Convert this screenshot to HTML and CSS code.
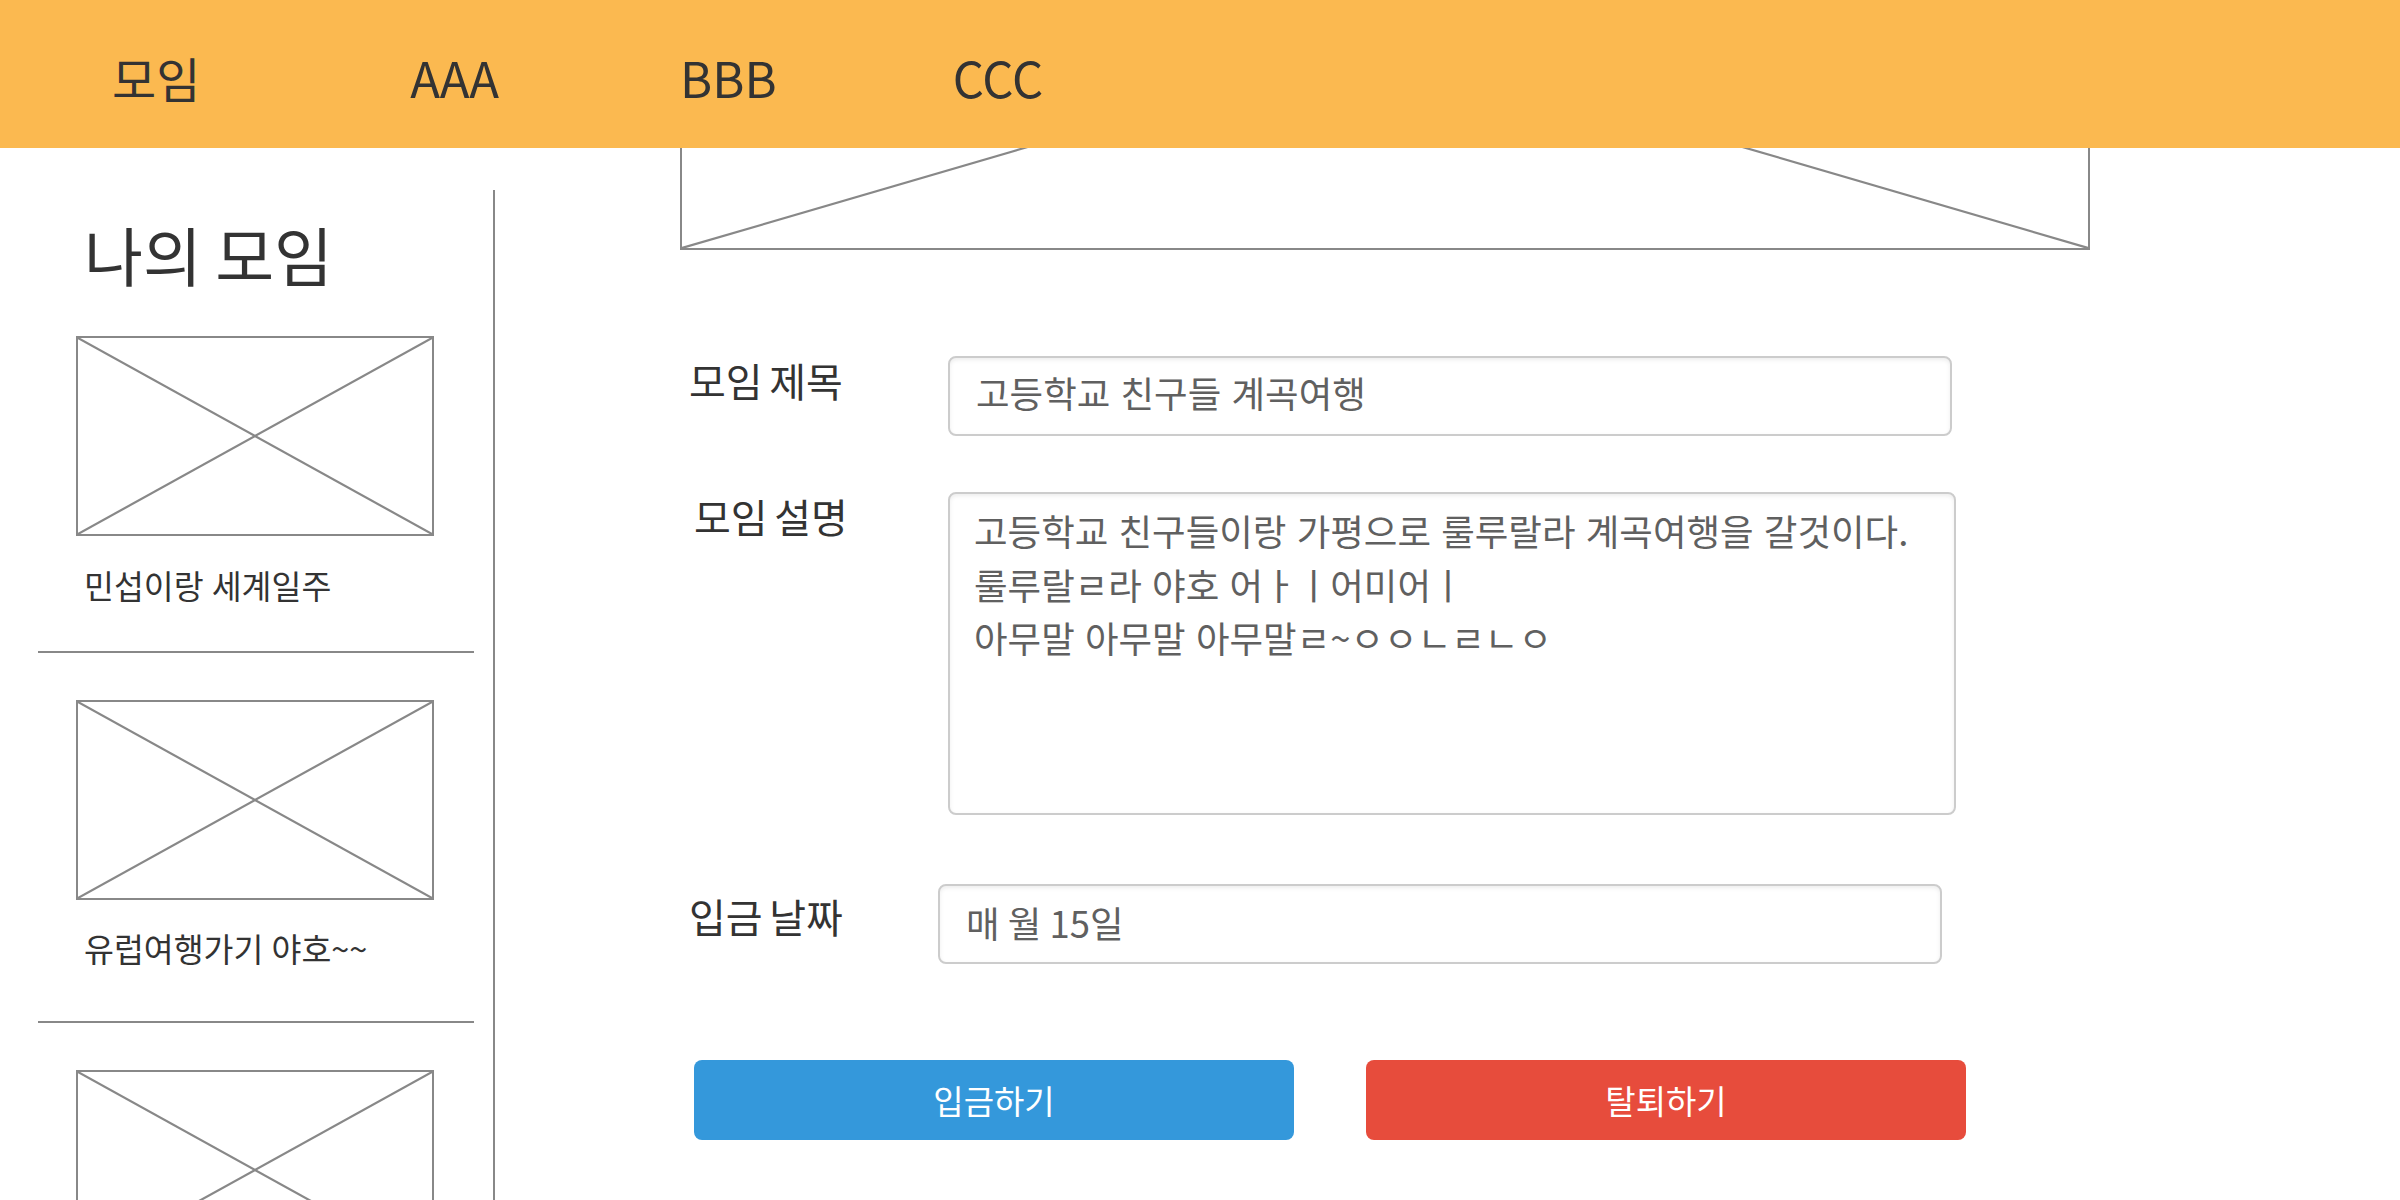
FILE: index.html
```html
<!DOCTYPE html>
<html lang="ko">
<head>
  <meta charset="UTF-8">
  <title>모임</title>
  <link rel="stylesheet" href="styles.css">
</head>
<body>

  <header class="topbar">
    <a class="nav-link nav-home">모임</a>
    <a class="nav-link nav-a">AAA</a>
    <a class="nav-link nav-b">BBB</a>
    <a class="nav-link">CCC</a>
  </header>

  <div class="page">
    <aside class="sidebar">
      <h2 class="sidebar-title">나의 모임</h2>

      <div class="group-card">
        <svg class="thumb" viewBox="0 0 100 100" preserveAspectRatio="none">
          <line x1="0" y1="0" x2="100" y2="100" />
          <line x1="100" y1="0" x2="0" y2="100" />
        </svg>
        <p class="group-name">민섭이랑 세계일주</p>
      </div>

      <div class="group-card group-card-tall">
        <svg class="thumb" viewBox="0 0 100 100" preserveAspectRatio="none">
          <line x1="0" y1="0" x2="100" y2="100" />
          <line x1="100" y1="0" x2="0" y2="100" />
        </svg>
        <p class="group-name">유럽여행가기 야호~~</p>
      </div>

      <div class="group-card group-card-last">
        <svg class="thumb" viewBox="0 0 100 100" preserveAspectRatio="none">
          <line x1="0" y1="0" x2="100" y2="100" />
          <line x1="100" y1="0" x2="0" y2="100" />
        </svg>
      </div>
    </aside>

    <main class="content">
      <!-- banner is scrolled mostly under the top bar -->
      <div class="banner-clip">
        <svg class="banner" viewBox="0 0 100 100" preserveAspectRatio="none">
          <line x1="0" y1="0" x2="100" y2="100" />
          <line x1="100" y1="0" x2="0" y2="100" />
        </svg>
      </div>

      <div class="form-row form-row-title">
        <label class="form-label">모임 제목</label>
        <div class="field">고등학교 친구들 계곡여행</div>
      </div>

      <div class="form-row form-row-desc">
        <label class="form-label">모임 설명</label>
        <div class="field field-area">고등학교 친구들이랑 가평으로 룰루랄라 계곡여행을 갈것이다.<br>룰루랄ㄹ라 야호 어ㅏㅣ어미어ㅣ<br>아무말 아무말 아무말ㄹ~ㅇㅇㄴㄹㄴㅇ</div>
      </div>

      <div class="form-row form-row-date">
        <label class="form-label">입금 날짜</label>
        <div class="field field-date">매 월 15일</div>
      </div>

      <div class="actions">
        <button class="btn btn-blue">입금하기</button>
        <button class="btn btn-red">탈퇴하기</button>
      </div>
    </main>
  </div>

</body>
</html>
```

FILE: styles.css
```css
* { box-sizing: border-box; }
html, body { margin: 0; height: 100%; }
body { height: 1200px; overflow: hidden; background: #fff; color: #333; font-family: "Noto Sans CJK KR", "Noto Sans", sans-serif; }

.topbar { display: flex; align-items: center; height: 148px; padding: 0 0 0 112px; background: #fbb950; }
.nav-link { font-size: 49px; line-height: 60px; margin-top: 5px; margin-right: 176px; color: #333; }
.nav-home { font-size: 48px; margin-right: 210px; }
.nav-a { margin-right: 181px; }

.page { display: flex; height: 1052px; overflow: hidden; }

.sidebar { flex: none; width: 495px; margin-top: 42px; padding: 17px 19px 0 38px; border-right: 2px solid #888; }
.sidebar-title { margin: 0 0 37px 46px; font-size: 64px; line-height: 92px; font-weight: 400; word-spacing: -4.5px; }

.group-card { padding-bottom: 46px; border-bottom: 2px solid #888; margin-bottom: 47px; }
.group-card-tall { padding-bottom: 53px; }
.group-card-last { border-bottom: 0; }
.group-name { margin: 29px 0 0 46px; font-size: 32.5px; line-height: 40px; word-spacing: -1px; }
.group-card-tall .group-name { margin-top: 28px; }

.thumb, .banner { display: block; border: 2px solid #888; background: #fff; }
.thumb { width: 358px; height: 200px; margin-left: 38px; }
.thumb line, .banner line { stroke: #888; stroke-width: 2.2; vector-effect: non-scaling-stroke; }

.content { flex: none; width: 1600px; padding-left: 185px; }
.banner-clip { display: flex; flex-direction: column; justify-content: flex-end; width: 1410px; height: 102px; overflow: hidden; }
.banner { flex: none; width: 1410px; height: 415px; }

.form-row { display: flex; align-items: flex-start; }
.form-row-title { margin-top: 106px; }
.form-row-desc { margin-top: 56px; }
.form-row-date { margin-top: 69px; }

.form-label { flex: none; width: 268px; padding-left: 9px; font-size: 40px; line-height: 48px; color: #333; word-spacing: -4.5px; }
.form-row-desc .form-label { padding-left: 14px; }
.form-row-date .form-label { width: 258px; margin-top: 8px; }

.field { width: 1004px; height: 80px; padding: 0 26px; border: 2px solid #ccc; border-radius: 8px; box-shadow: inset 0 2px 4px rgba(0,0,0,0.075); font-size: 36.5px; line-height: 70px; color: #606060; }
.field-area { width: 1008px; height: 323px; padding: 10px 24px; line-height: 53.5px; white-space: nowrap; }
.field-date { line-height: 73px; word-spacing: -2px; }

.actions { display: flex; gap: 72px; margin-top: 96px; padding-left: 14px; }
.btn { width: 600px; height: 80px; border: 0; border-radius: 8px; color: #fff; font-family: inherit; font-size: 33px; }
.btn-blue { background: #3498db; }
.btn-red { background: #e74c3c; }
```
